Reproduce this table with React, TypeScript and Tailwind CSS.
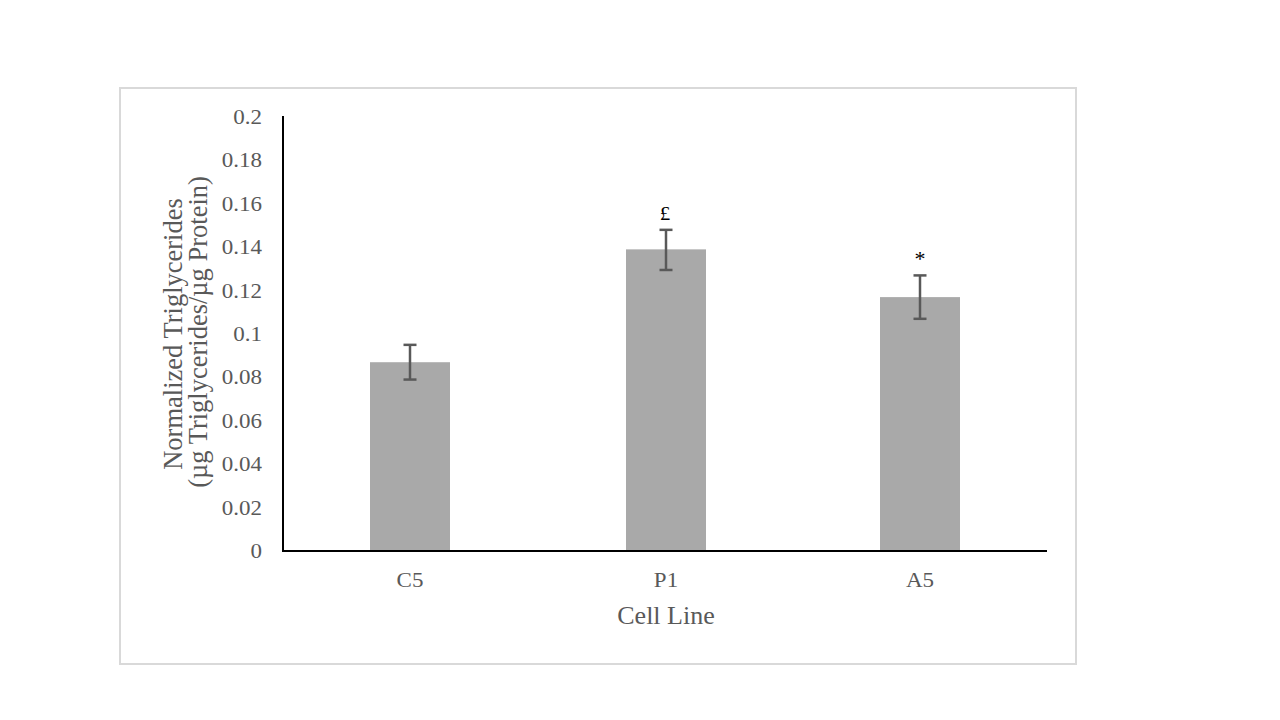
import React from 'react';

// Données du graphique (valeurs moyennes et écarts)
const bars = [
  { label: 'C5', x: 410, value: 0.087, top: 0.095, bottom: 0.079 },
  { label: 'P1', x: 666, value: 0.139, top: 0.148, bottom: 0.1295 },
  { label: 'A5', x: 920, value: 0.117, top: 0.127, bottom: 0.107 },
];

const ticks = [0, 0.02, 0.04, 0.06, 0.08, 0.1, 0.12, 0.14, 0.16, 0.18, 0.2];
const tickLabels = ['0', '0.02', '0.04', '0.06', '0.08', '0.1', '0.12', '0.14', '0.16', '0.18', '0.2'];

const y0 = 551;
const scale = 434 / 0.2;
const yOf = (v: number) => y0 - v * scale;
const serif = 'Liberation Serif, serif';

export default function App() {
  return (
    <div className="w-[1280px] h-[720px] bg-white pt-[87px] pl-[119px] font-['Liberation_Serif',serif]">
      <div className="w-[958px] h-[578px] border-2 border-[#d9d9d9] bg-white">
        <svg width="954" height="574" viewBox="121 89 954 574" className="block">
          {/* barres */}
          {bars.map((b) => (
            <rect key={b.label} x={b.x - 40} y={yOf(b.value)} width={80} height={y0 - yOf(b.value)} fill="#a9a9a9" />
          ))}

          {/* barres d'erreur */}
          {bars.map((b) => (
            <g key={b.label + '-err'} stroke="#595959" strokeWidth={2.5}>
              <line x1={b.x} x2={b.x} y1={yOf(b.top)} y2={yOf(b.bottom)} />
              <line x1={b.x - 6.5} x2={b.x + 6.5} y1={yOf(b.top)} y2={yOf(b.top)} />
              <line x1={b.x - 6.5} x2={b.x + 6.5} y1={yOf(b.bottom)} y2={yOf(b.bottom)} />
            </g>
          ))}

          {/* axes */}
          <line x1={283} x2={283} y1={116} y2={552} stroke="#000" strokeWidth={2} />
          <line x1={282} x2={1047} y1={551} y2={551} stroke="#000" strokeWidth={2} />

          {/* graduations */}
          {ticks.map((t, i) => (
            <text
              key={t}
              transform={`translate(262 ${yOf(t) + 7}) scale(1.15 1)`}
              textAnchor="end"
              fontSize={20}
              fill="#595959"
              fontFamily={serif}
            >
              {tickLabels[i]}
            </text>
          ))}

          {/* marqueurs de significativité */}
          <text transform="translate(665 220) scale(1.1 1)" textAnchor="middle" fontSize={19} fill="#000" fontFamily={serif}>£</text>
          <text transform="translate(920 266) scale(1.1 1)" textAnchor="middle" fontSize={20} fill="#000" fontFamily={serif}>*</text>

          {/* catégories */}
          {bars.map((b) => (
            <text
              key={b.label + '-lbl'}
              transform={`translate(${b.x} 587) scale(1.15 1)`}
              textAnchor="middle"
              fontSize={20}
              fill="#595959"
              fontFamily={serif}
            >
              {b.label}
            </text>
          ))}

          <text x={666} y={624} textAnchor="middle" fontSize={26} fill="#595959" fontFamily={serif}>Cell Line</text>

          <text transform="translate(182 334) rotate(-90)" textAnchor="middle" fontSize={26.5} fill="#595959" fontFamily={serif}>
            Normalized Triglycerides
          </text>
          <text transform="translate(207 332) rotate(-90)" textAnchor="middle" fontSize={26.5} fill="#595959" fontFamily={serif}>
            (µg Triglycerides/µg Protein)
          </text>
        </svg>
      </div>
    </div>
  );
}
